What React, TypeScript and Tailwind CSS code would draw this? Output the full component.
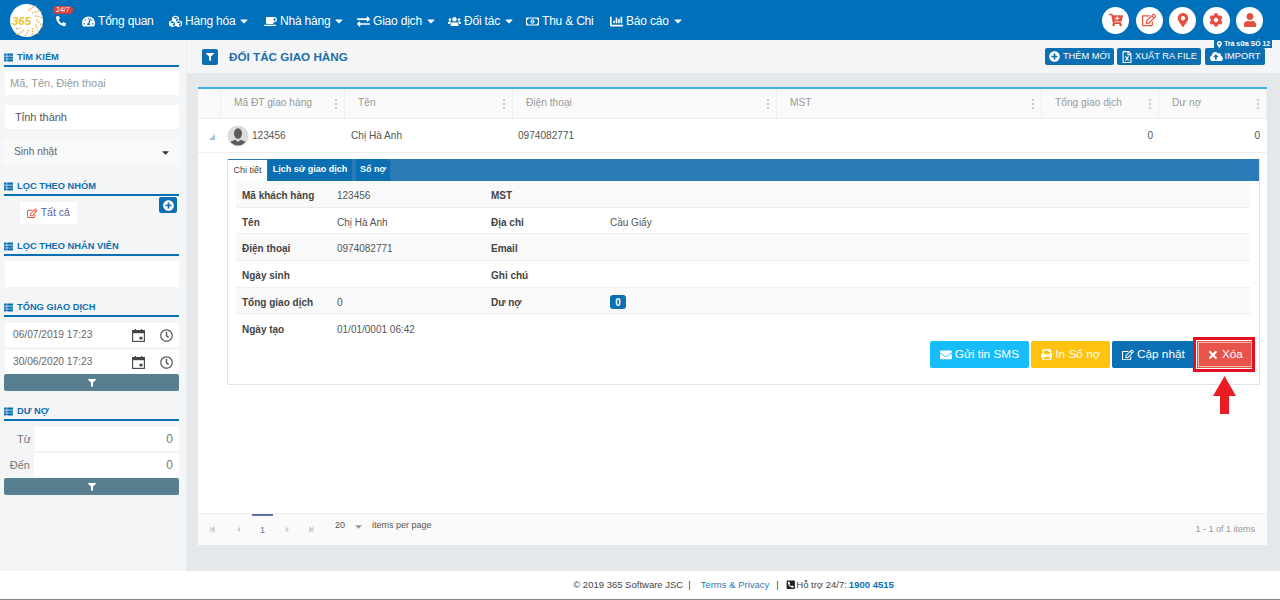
import type { ReactNode } from "react";
import {
  FaCaretDown,
  FaCartPlus,
  FaChartBar,
  FaCloudUploadAlt,
  FaCog,
  FaCubes,
  FaCoffee,
  FaEnvelope,
  FaExchangeAlt,
  FaFilter,
  FaThList,
  FaMapMarkerAlt,
  FaRegMoneyBillAlt,
  FaPhoneAlt,
  FaPhoneSquareAlt,
  FaPlusCircle,
  FaPrint,
  FaRegClock,
  FaRegEdit,
  FaRegFileExcel,
  FaStepBackward,
  FaStepForward,
  FaTachometerAlt,
  FaTimes,
  FaUser,
  FaUsers,
  FaCaretLeft,
  FaCaretRight,
} from "react-icons/fa";

const navItems = [
  { icon: <FaTachometerAlt />, label: "Tổng quan", caret: false, w: "w-[87px]" },
  { icon: <FaCubes />, label: "Hàng hóa", caret: true, w: "w-[95px]" },
  { icon: <FaCoffee />, label: "Nhà hàng", caret: true, w: "w-[93px]" },
  { icon: <FaExchangeAlt />, label: "Giao dịch", caret: true, w: "w-[91px]" },
  { icon: <FaUsers />, label: "Đối tác", caret: true, w: "w-[78px]" },
  { icon: <FaRegMoneyBillAlt />, label: "Thu & Chi", caret: false, w: "w-[84px]" },
  { icon: <FaChartBar />, label: "Báo cáo", caret: true, w: "w-[80px]" },
];

const columns = [
  { label: "Mã ĐT giao hàng", w: "w-[124px]" },
  { label: "Tên", w: "w-[168px]" },
  { label: "Điện thoại", w: "w-[264px]" },
  { label: "MST", w: "w-[265px]" },
  { label: "Tổng giao dịch", w: "w-[117px]" },
  { label: "Dư nợ", w: "w-[108px]" },
];

const details: { a: string; b: ReactNode; c: string; d?: ReactNode; h: string }[] = [
  { a: "Mã khách hàng", b: "123456", c: "MST", h: "h-[27px]" },
  { a: "Tên", b: "Chị Hà Anh", c: "Địa chỉ", d: "Cầu Giấy", h: "h-[26px]" },
  { a: "Điện thoại", b: "0974082771", c: "Email", h: "h-[27px]" },
  { a: "Ngày sinh", b: "", c: "Ghi chú", h: "h-[27px]" },
  {
    a: "Tổng giao dịch",
    b: "0",
    c: "Dư nợ",
    d: <span className="flex h-[14px] w-[16px] items-center justify-center rounded-[3px] bg-[#0b6fb4] text-[10px] font-bold text-white">0</span>,
    h: "h-[26px]",
  },
  { a: "Ngày tạo", b: "01/01/0001 06:42", c: "", h: "h-[27px]" },
];

function Heading({ children, className = "" }: { children: ReactNode; className?: string }) {
  return (
    <div className={`flex h-[13px] items-center gap-[4px] text-[9.3px] leading-none font-bold text-[#0b6fb4] ${className}`}>
      <FaThList className="text-[9px]" />
      {children}
    </div>
  );
}

function Rule() {
  return <div className="mt-[1px] h-[2px] bg-[#0b6fb4]" />;
}

function FilterBar({ className = "" }: { className?: string }) {
  return (
    <div className={`flex h-[17px] items-center justify-center rounded-[2px] bg-[#577f90] text-[8px] text-white ${className}`}>
      <FaFilter />
    </div>
  );
}

function Logo() {
  const dots = [];
  for (let i = 0; i < 34; i++) {
    const a = -1.35 + (i / 34) * 3.9;
    const r = 10 + (i % 4) * 2.2;
    dots.push(<circle key={i} cx={16 + r * Math.cos(a)} cy={16 + r * Math.sin(a)} r="0.8" fill="#f1a33c" />);
  }
  return (
    <svg width="33" height="33" viewBox="0 0 32 32" className="shrink-0">
      <circle cx="16" cy="16" r="16" fill="#fff" />
      {dots}
      <text x="2" y="20" fontSize="11" fontWeight="700" fontStyle="italic" fill="#eac22a" fontFamily="Liberation Sans">
        365
      </text>
    </svg>
  );
}

function Avatar() {
  return (
    <svg width="22" height="22" viewBox="0 0 22 22" className="shrink-0">
      <circle cx="11" cy="11" r="10.5" fill="#dcdcdc" />
      <clipPath id="av">
        <circle cx="11" cy="11" r="9.5" />
      </clipPath>
      <g clipPath="url(#av)" fill="#5b5b5b">
        <ellipse cx="11" cy="8.5" rx="4" ry="5.2" />
        <path d="M1 22c0-4.5 3.5-6 7.5-7.2L11 17l2.5-2.2C17.5 16 21 17.5 21 22z" />
      </g>
    </svg>
  );
}

function CalendarIcon() {
  return (
    <svg width="13" height="13" viewBox="0 0 13 13" className="shrink-0 text-[#444]">
      <rect x="0.6" y="1.6" width="11.8" height="10.8" fill="none" stroke="currentColor" strokeWidth="1.1" />
      <rect x="0.6" y="1.6" width="11.8" height="2.6" fill="currentColor" />
      <rect x="2.8" y="0" width="1.2" height="2" fill="currentColor" />
      <rect x="9" y="0" width="1.2" height="2" fill="currentColor" />
      <rect x="7.5" y="7.8" width="3" height="2.6" fill="currentColor" />
    </svg>
  );
}

export default function App() {
  return (
    <div className="flex h-[600px] w-[1280px] flex-col overflow-hidden bg-[#e4e8eb] font-['Liberation_Sans',Arial,sans-serif] text-[#555]">
      <header className="flex h-[40px] shrink-0 items-center bg-[#0070ba] text-white">
        <div className="ml-[10px] w-[34px]">
          <Logo />
        </div>
        <div className="relative ml-[12px] w-[26px] text-[10px]">
          <FaPhoneAlt className="mt-[1px]" />
          <span className="absolute top-[-9px] left-[-3px] rounded-full bg-[#d9403a] px-[3px] text-[7px] leading-[8px] text-white">24/7</span>
        </div>
        {navItems.map((n) => (
          <div key={n.label} className={`flex items-center gap-[3px] pt-[2px] text-[12px] ${n.w}`}>
            <span className="flex w-[13px] justify-center text-[13px]">{n.icon}</span>
            <span className="tracking-[-0.2px]">{n.label}</span>
            {n.caret && <FaCaretDown className="text-[12px]" />}
          </div>
        ))}
        <div className="mr-[17px] ml-auto flex gap-[6.5px]">
          {[<FaCartPlus />, <FaRegEdit />, <FaMapMarkerAlt />, <FaCog />, <FaUser />].map((ic, i) => (
            <span key={i} className="flex h-[27px] w-[27px] items-center justify-center rounded-full bg-white text-[14px] text-[#e4503f]">
              {ic}
            </span>
          ))}
        </div>
      </header>

      <div className="flex min-h-0 flex-1">
        <aside className="w-[187px] shrink-0 border-r border-[#eceef0] bg-[#f3f5f7] pt-[11px] pr-[7px] pl-[4px] text-[11px]">
          <Heading>TÌM KIẾM</Heading>
          <Rule />
          <div className="mt-[4px] ml-[1px] flex h-[24px] items-center bg-white px-[5px] text-[#999]">Mã, Tên, Điện thoại</div>
          <div className="mt-[10px] ml-[1px] flex h-[24px] items-center bg-white px-[10px] text-[#555]">Tỉnh thành</div>
          <div className="mt-[10px] flex h-[26px] items-center justify-between bg-[#f8f9fa] pr-[8px] pl-[10px] text-[10.2px] text-[#666]">
            Sinh nhật
            <FaCaretDown className="text-[11px] text-[#333]" />
          </div>

          <Heading className="mt-[15px]">LỌC THEO NHÓM</Heading>
          <Rule />
          <div className="flex items-start justify-between">
            <div className="mt-[6px] ml-[16px] flex h-[22px] w-[57px] items-center justify-center gap-[3px] bg-white text-[10.5px] text-[#5a62a8]">
              <FaRegEdit className="text-[#e4503f]" />
              Tất cả
            </div>
            <span className="mt-[1px] mr-[2px] flex h-[16px] w-[18px] items-center justify-center rounded-[2px] bg-[#0b6fb4] text-[11px] text-white">
              <FaPlusCircle />
            </span>
          </div>

          <Heading className="mt-[16px]">LỌC THEO NHÂN VIÊN</Heading>
          <Rule />
          <div className="mt-[5px] ml-[1px] h-[26px] bg-white" />

          <Heading className="mt-[14px]">TỔNG GIAO DỊCH</Heading>
          <Rule />
          {["06/07/2019 17:23", "30/06/2020 17:23"].map((d, i) => (
            <div key={d} className={`ml-[1px] flex h-[24px] items-center bg-white pr-[1px] pl-[8px] ${i === 0 ? "mt-[6px]" : "mt-[3px]"}`}>
              <span className="flex-1 text-[10.2px] text-[#666]">{d}</span>
              <CalendarIcon />
              <FaRegClock className="mr-[5px] ml-[15px] text-[13px] text-[#555]" />
            </div>
          ))}
          <FilterBar />

          <Heading className="mt-[14px]">DƯ NỢ</Heading>
          <Rule />
          {[
            { label: "Từ", w: "w-[30px]" },
            { label: "Đến", w: "w-[29px]" },
          ].map((r, i) => (
            <div key={r.label} className={`ml-[1px] flex h-[24px] items-center ${i === 0 ? "mt-[6px]" : "mt-[2px]"}`}>
              <span className={`pr-[4px] text-right text-[#777] ${r.w}`}>{r.label}</span>
              <span className="flex h-full flex-1 items-center justify-end bg-white pr-[6px] text-[12px] text-[#777]">0</span>
            </div>
          ))}
          <FilterBar className="mt-[1px]" />
        </aside>

        <main className="flex min-w-0 flex-1 flex-col">
          <div className="flex h-[33px] shrink-0 items-center bg-[#f3f5f7] pr-[15px] pl-[15px]">
            <span className="flex h-[16px] w-[16px] items-center justify-center rounded-[2px] bg-[#0b6fb4] text-[8px] text-white">
              <FaFilter />
            </span>
            <h1 className="mt-[1px] ml-[11px] text-[11.7px] font-bold text-[#206fa8]">ĐỐI TÁC GIAO HÀNG</h1>
            <div className="relative ml-auto flex gap-[3px] text-[9.3px] text-white">
              <span className="absolute top-[-8px] right-[-7px] bg-[#0b6fb4] px-[2px] text-[6.8px] leading-[8px] font-bold">
                <FaMapMarkerAlt className="mr-[1px] inline" />
                Trà sữa SỐ 12
              </span>
              <span className="flex h-[17px] w-[69px] items-center justify-center gap-[3px] rounded-[2px] bg-[#0b6fb4]">
                <FaPlusCircle className="text-[11px]" />
                THÊM MỚI
              </span>
              <span className="flex h-[17px] w-[84px] items-center justify-center gap-[2px] rounded-[2px] bg-[#0b6fb4]">
                <FaRegFileExcel className="text-[12px]" />
                XUẤT RA FILE
              </span>
              <span className="ml-[1px] flex h-[17px] w-[60px] items-center justify-center gap-[2px] rounded-[2px] bg-[#0b6fb4]">
                <FaCloudUploadAlt className="text-[13px]" />
                IMPORT
              </span>
            </div>
          </div>

          <div className="mt-[14px] mr-[13px] ml-[11px] flex h-[458px] shrink-0 flex-col border-t-2 border-[#3fb0d9] bg-white text-[10.1px]">
            <div className="flex h-[30px] shrink-0 border-b border-[#eee] bg-[#fafafa] text-[10.2px] text-[#999]">
              <div className="w-[23px] border-r border-[#eee]" />
              {columns.map((c) => (
                <div key={c.label} className={`flex items-center justify-between border-r border-[#eee] pr-[7px] pb-[2px] pl-[13px] ${c.w}`}>
                  {c.label}
                  <span className="mt-[2px] flex flex-col gap-[2px]">
                    <i className="h-[2px] w-[2px] rounded-full bg-[#bbb]" />
                    <i className="h-[2px] w-[2px] rounded-full bg-[#bbb]" />
                    <i className="h-[2px] w-[2px] rounded-full bg-[#bbb]" />
                  </span>
                </div>
              ))}
            </div>

            <div className="flex h-[34px] shrink-0 items-center border-b border-[#eee] text-[#555]">
              <div className="flex w-[29px] justify-center">
                <svg width="6" height="6" viewBox="0 0 6 6" className="mt-[3px] ml-[-2px]">
                  <path d="M6 0v6H0z" fill="#9fc3dc" />
                </svg>
              </div>
              <div className="flex w-[124px] items-center gap-[3px]">
                <Avatar />
                123456
              </div>
              <div className="w-[167px]">Chị Hà Anh</div>
              <div className="w-[524px]">0974082771</div>
              <div className="w-[116px] pr-[5px] text-right">0</div>
              <div className="flex-1 pr-[7px] text-right">0</div>
            </div>

            <div className="mt-[6px] mr-[7px] ml-[29px] flex h-[226px] shrink-0 flex-col border border-t-0 border-[#e2e2e2]">
              <div className="flex h-[22px] shrink-0 bg-[#2a7ab5] text-[9px] font-bold text-white">
                <span className="flex w-[39px] items-center justify-center border-t border-[#2a7ab5] bg-white font-normal text-[#444]">Chi tiết</span>
                <span className="ml-[1px] flex w-[84px] items-center justify-center rounded-t-[2px] bg-[#0b6fb4]">Lịch sử giao dịch</span>
                <span className="ml-[4px] flex w-[34px] items-center justify-center rounded-t-[2px] bg-[#0b6fb4]">Sổ nợ</span>
              </div>
              <div className="mr-[9px] ml-[8px] text-[10px]">
                {details.map((r, i) => (
                  <div key={r.a} className={`flex items-center border-b border-[#eee] pt-[3px] pl-[6px] text-[#555] last:border-b-0 ${r.h} ${i % 2 === 0 ? "bg-[#f9f9f9]" : "bg-white"} ${i === 5 ? "bg-white" : ""}`}>
                    <b className="w-[95px] font-bold text-[#444]">{r.a}</b>
                    <span className="w-[154px]">{r.b}</span>
                    <b className="w-[119px] font-bold text-[#444]">{r.c}</b>
                    <span>{r.d}</span>
                  </div>
                ))}
              </div>
              <div className="flex justify-end gap-[2px] pr-[6px] text-[11.8px] text-white">
                <span className="flex h-[27px] w-[99px] items-center justify-center gap-[3px] rounded-[2px] bg-[#17bdfa]">
                  <FaEnvelope />
                  Gửi tin SMS
                </span>
                <span className="flex h-[27px] w-[79px] items-center justify-center gap-[3px] rounded-[2px] bg-[#ffc20e]">
                  <FaPrint />
                  In Sổ nợ
                </span>
                <span className="flex h-[27px] w-[83px] items-center justify-center gap-[3px] rounded-[2px] bg-[#0b6fb4]">
                  <FaRegEdit />
                  Cập nhật
                </span>
                <span className="relative flex h-[27px] w-[56px] items-center justify-center gap-[3px] bg-[#e8534a] outline outline-1 -outline-offset-2 outline-[#f5b5b0]">
                  <FaTimes />
                  Xóa
                  <span className="absolute top-[-4px] left-[-4px] h-[35px] w-[62px] border-[3px] border-[#e3101f]" />
                  <svg width="23" height="38" viewBox="0 0 23 38" className="absolute top-[35px] left-[16px]">
                    <path d="M11.5 0 23 20H16V38H7V20H0Z" fill="#ec1c24" />
                  </svg>
                </span>
              </div>
            </div>

            <div className="flex-1" />

            <div className="flex h-[32px] shrink-0 items-center border-t border-[#eee] bg-[#fafafa] text-[#ccc]">
              <FaStepBackward className="ml-[11px] text-[7px]" />
              <FaCaretLeft className="ml-[18px] text-[9px]" />
              <span className="ml-[9px] flex h-[32px] w-[21px] items-center justify-center border-t-2 border-[#6272a8] text-[9px] text-[#6272a8]">1</span>
              <FaCaretRight className="ml-[10px] text-[9px]" />
              <FaStepForward className="ml-[16px] text-[7px]" />
              <span className="mb-[8px] ml-[20px] text-[9px] text-[#555]">20</span>
              <FaCaretDown className="mb-[7px] ml-[8px] text-[11px] text-[#999]" />
              <span className="mb-[7px] ml-[8px] text-[9px] text-[#555]">items per page</span>
              <span className="mr-[12px] ml-auto text-[9px] text-[#999]">1 - 1 of 1 items</span>
            </div>
          </div>
          <div className="flex-1" />
        </main>
      </div>

      <footer className="flex h-[29px] shrink-0 items-center justify-center border-b border-[#888] bg-white pl-[187px] text-[9.5px] text-[#444]">
        <div className="flex items-center">
          © 2019 365 Software JSC
          <span className="mx-[5px]">|</span>
          <span className="ml-[5px] text-[#2a7ab5]">Terms &amp; Privacy</span>
          <span className="mx-[7px]">|</span>
          <FaPhoneSquareAlt className="mr-[1px] text-[#222]" />
          Hỗ trợ 24/7:
          <b className="ml-[2px] text-[#0b6fb4]">1900 4515</b>
        </div>
      </footer>
    </div>
  );
}
